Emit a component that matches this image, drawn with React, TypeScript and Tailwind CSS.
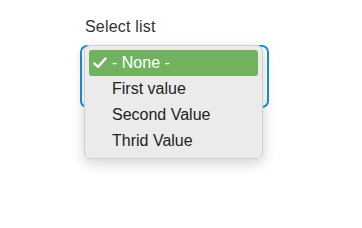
import { useState } from "react";

const options = ["- None -", "First value", "Second Value", "Thrid Value"];

export default function App() {
  const [selected] = useState(0);

  return (
    <div className="w-[362px] h-[228px] bg-white font-['Liberation_Sans',Arial,sans-serif] text-[#333]">
      <div className="pl-[80px] pt-[17px]">
        <label className="block pl-[5px] text-[16px] leading-[20px] tracking-[0.2px] text-[#333]">
          Select list
        </label>
        <div className="relative mt-[8px] w-[189px] h-[63px] rounded-[7px] border-2 border-[#1b8ddb]">
          <div className="absolute left-[2px] -top-[2px] w-[179px] h-[114px] rounded-[6px] border border-[#cfcfcf] bg-[#ebebeb] shadow-[0_4px_14px_rgba(0,0,0,0.18)] px-[4px] pt-[4px]">
            {options.map((opt, i) => (
              <div
                key={opt}
                className={`flex items-center h-[26px] rounded-[3px] text-[16px] ${
                  i === selected ? "bg-[#71b25f] text-white" : "text-[#222]"
                }`}
              >
                <span className="w-[23px] pl-[4px] flex items-center">
                  {i === selected && (
                    <svg width="14" height="12" viewBox="0 0 14 12" fill="none">
                      <path
                        d="M1.5 6.5 L5 10 L12.5 1.5"
                        stroke="white"
                        strokeWidth="2.4"
                        strokeLinecap="round"
                        strokeLinejoin="round"
                      />
                    </svg>
                  )}
                </span>
                <span>{opt}</span>
              </div>
            ))}
          </div>
        </div>
      </div>
    </div>
  );
}
